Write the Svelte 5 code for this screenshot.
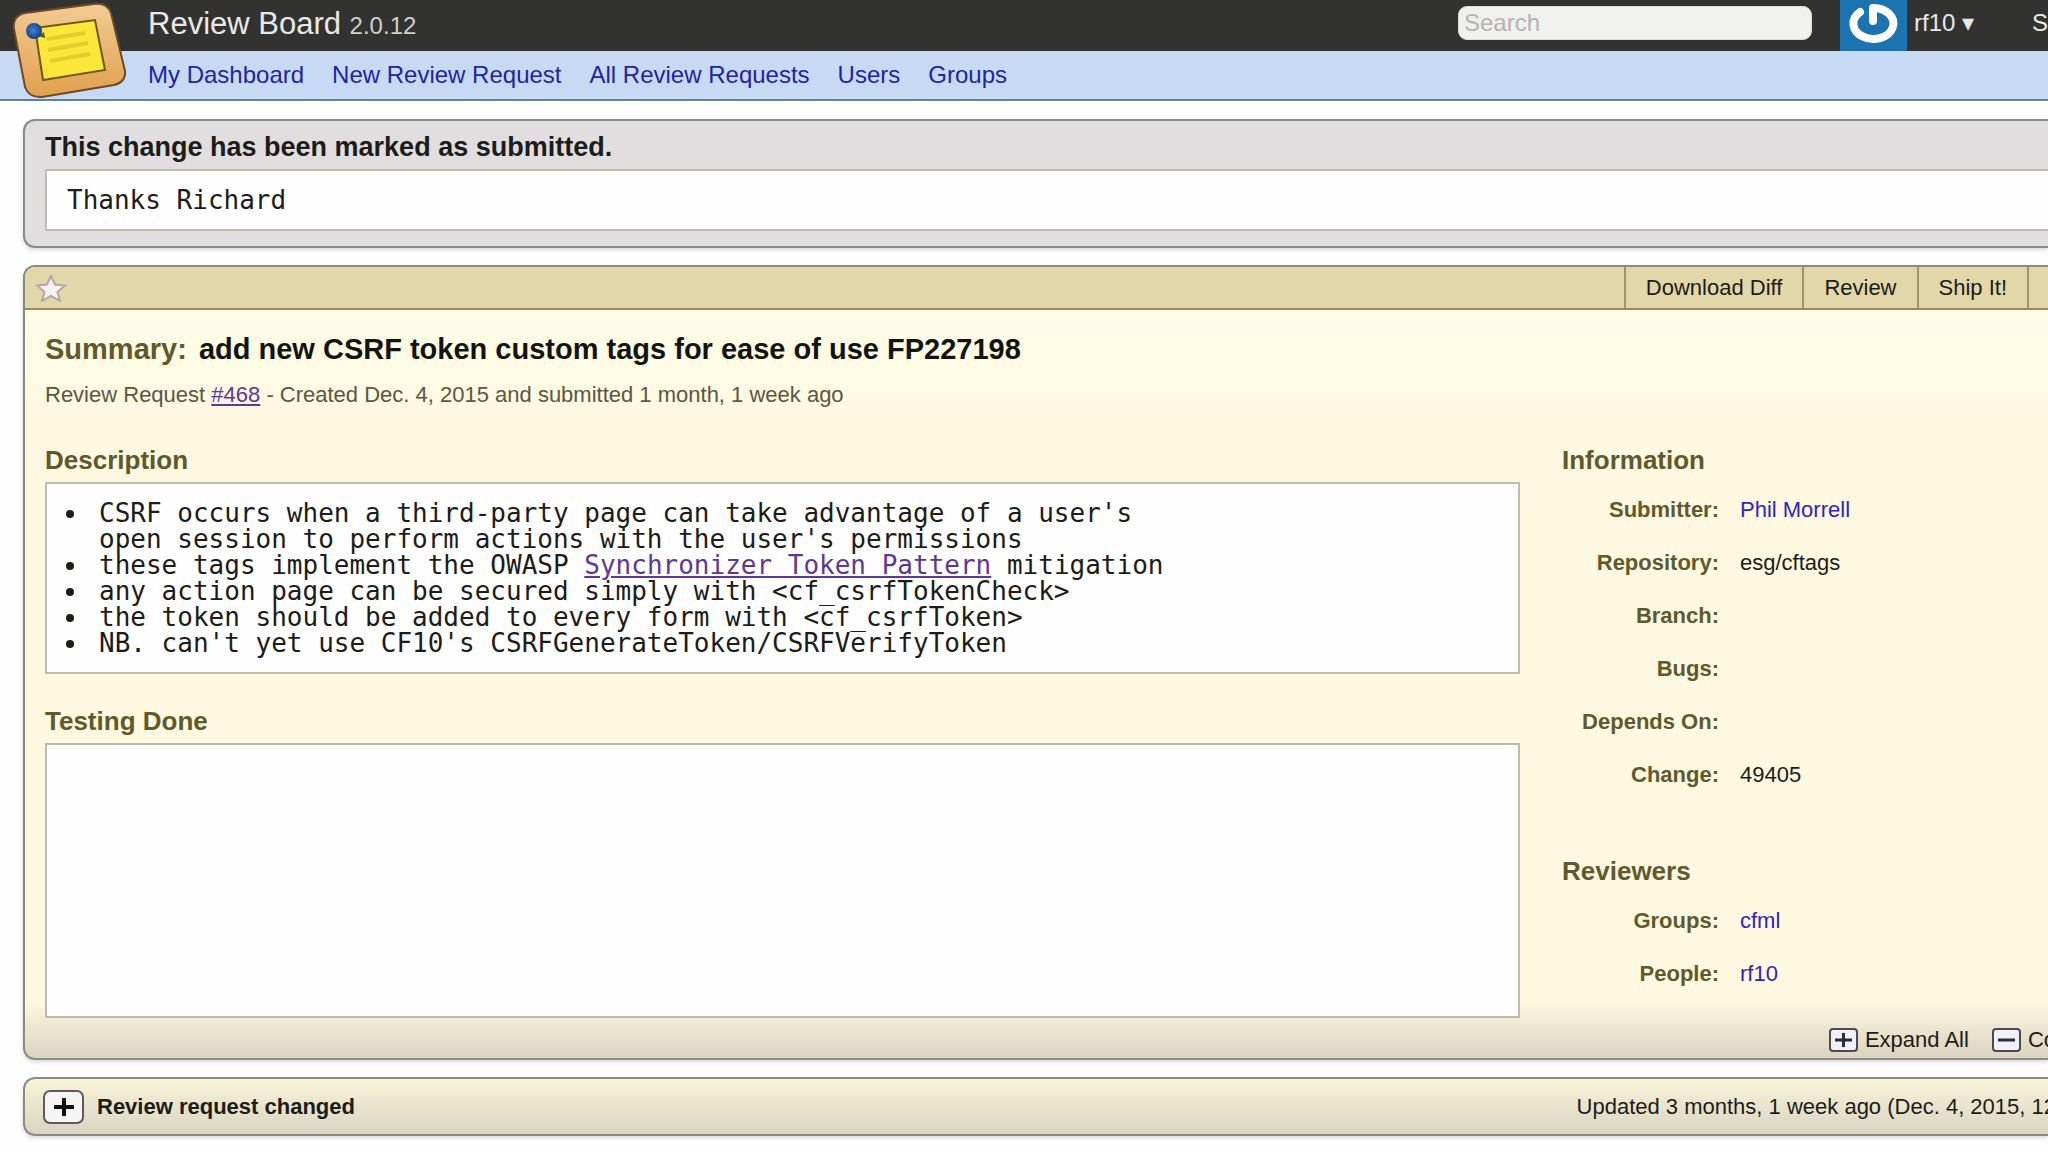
<script>
    const navLinks = ['My Dashboard', 'New Review Request', 'All Review Requests', 'Users', 'Groups'];
    const actions = ['Download Diff', 'Review', 'Ship It!'];

    const information = [
        { label: 'Submitter', value: 'Phil Morrell', link: true },
        { label: 'Repository', value: 'esg/cftags' },
        { label: 'Branch', value: '' },
        { label: 'Bugs', value: '' },
        { label: 'Depends On', value: '' },
        { label: 'Change', value: '49405' }
    ];

    const reviewers = [
        { label: 'Groups', value: 'cfml', link: true },
        { label: 'People', value: 'rf10', link: true }
    ];

    let search = $state('');
    let starred = $state(false);
</script>

{#snippet fields(rows)}
    <dl class="fields">
        {#each rows as row}
            <dt>{row.label}:</dt>
            <dd>
                {#if row.link}
                    <a href="#{row.value}">{row.value}</a>
                {:else}
                    {row.value}
                {/if}
            </dd>
        {/each}
    </dl>
{/snippet}

{#snippet toggleIcon(open)}
    <svg class="toggle-icon" width="29" height="24" viewBox="0 0 29 24" aria-hidden="true">
        <rect x="1" y="1" width="27" height="22" rx="3" fill="#f1effa" stroke="#4b4a50" stroke-width="2" />
        <path d={open ? 'M6 12h17' : 'M6 12h17M14.5 5v14'} stroke="#2c2c34" stroke-width="3" />
    </svg>
{/snippet}

<div class="page">
    <header>
        <div class="topbar">
            <h1>Review Board <span class="version">2.0.12</span></h1>
            <input type="text" class="search" placeholder="Search" aria-label="Search" bind:value={search} />
            <div class="account">
                <svg class="avatar" width="67" height="51" viewBox="0 0 67 51" aria-hidden="true">
                    <rect width="67" height="51" fill="#1b74b0" />
                    <path d="M20 12A20 15.500 0 1 0 33 8V21" fill="none" stroke="#fbfeff" stroke-width="8" stroke-linecap="round" stroke-linejoin="round" />
                </svg>
                <button class="user-menu">rf10 <span class="caret">▾</span></button>
            </div>
            <a class="support" href="#support">S</a>
        </div>
        <nav>
            {#each navLinks as link}
                <a href="#nav">{link}</a>
            {/each}
        </nav>
        <a class="logo" href="#home" aria-label="Home">
            <svg width="130" height="102" viewBox="0 0 130 102">
                <defs>
                    <linearGradient id="cork" x1="0" y1="0" x2="0" y2="1">
                        <stop offset="0" stop-color="#f3cb95" />
                        <stop offset="1" stop-color="#e2a04e" />
                    </linearGradient>
                    <radialGradient id="pin" cx="0.45" cy="0.45" r="0.6">
                        <stop offset="0" stop-color="#3d82dd" />
                        <stop offset="1" stop-color="#173a78" />
                    </radialGradient>
                </defs>
                <path d="M25 13L94 4Q107 2 111 13L125 71Q126 82 114 85L42 97Q29 98 25 87L14 29Q12 16 25 13Z" fill="url(#cork)" stroke="#6b4a25" stroke-width="2" />
                <path d="M35 28L95 20L105 70L43 80Z" fill="#fbe73a" stroke="#6f5a17" stroke-width="2" />
                <path d="M47 39l38-6M48 50l40-7M50 61l40-7" stroke="#e3cd2a" stroke-width="4" />
                <path d="M38 36l7 2-1-6z" fill="#5d5220" />
                <circle cx="34" cy="31" r="8" fill="url(#pin)" />
            </svg>
        </a>
    </header>

    <main>
        <section class="panel submitted">
            <h2>This change has been marked as submitted.</h2>
            <pre class="text-box open-ended">Thanks Richard</pre>
        </section>

        <section class="panel request">
            <div class="actions">
                <button class="star" aria-label="Star" aria-pressed={starred} onclick={() => (starred = !starred)}>
                    <svg width="32" height="28" viewBox="0 0 32 28">
                        <path d="M16 2l4 8.500 10 1-7.500 6.500 2.500 9-9-5-9 5 2.500-9-7.500-6.500 10-1z" fill="#f4f2f4" stroke="#b5a79b" stroke-width="2" />
                    </svg>
                </button>
                <ul>
                    {#each actions as action}
                        <li><button>{action}</button></li>
                    {/each}
                    <li class="more"></li>
                </ul>
            </div>

            <div class="body">
                <h2 class="summary"><span class="label">Summary:</span> add new CSRF token custom tags for ease of use FP227198</h2>
                <p class="meta">Review Request <a href="#468">#468</a> - Created Dec. 4, 2015 and submitted 1 month, 1 week ago</p>

                <div class="columns">
                    <div class="content">
                        <h3>Description</h3>
                        <div class="text-box description">
                            <ul>
                                <li>CSRF occurs when a third-party page can take advantage of a user's<br />open session to perform actions with the user's permissions</li>
                                <li>these tags implement the OWASP <a href="#pattern">Synchronizer Token Pattern</a> mitigation</li>
                                <li>any action page can be secured simply with &lt;cf_csrfTokenCheck&gt;</li>
                                <li>the token should be added to every form with &lt;cf_csrfToken&gt;</li>
                                <li>NB. can't yet use CF10's CSRFGenerateToken/CSRFVerifyToken</li>
                            </ul>
                        </div>
                        <h3>Testing Done</h3>
                        <div class="text-box testing"></div>
                    </div>
                    <aside>
                        <h3>Information</h3>
                        {@render fields(information)}
                        <h3>Reviewers</h3>
                        {@render fields(reviewers)}
                    </aside>
                </div>
            </div>

            <div class="footer">
                <button>{@render toggleIcon(false)}Expand All</button>
                <button>{@render toggleIcon(true)}Co</button>
            </div>
        </section>

        <section class="panel change">
            <button class="expand" aria-label="Expand">
                <svg width="20" height="18" viewBox="0 0 20 18">
                    <path d="M0 9h20M10 0v18" stroke="#111" stroke-width="4" />
                </svg>
            </button>
            <h4>Review request changed</h4>
            <span class="timestamp">Updated 3 months, 1 week ago (Dec. 4, 2015, 12</span>
        </section>
    </main>
</div>

<style>
    :global(body) {
        margin: 0;
        background: #fefefe;
    }

    .page {
        overflow: hidden;
        padding-bottom: 16px;
        font-family: "Liberation Sans", Arial, sans-serif;
        font-size: 22px;
        line-height: 28px;
        color: #1c1c18;
    }

    h1, h2, h3, h4, p, ul, dl, dd, pre {
        margin: 0;
        padding: 0;
    }

    button {
        padding: 0;
        border: none;
        background: none;
        font: inherit;
        color: inherit;
        white-space: nowrap;
        cursor: pointer;
    }

    a {
        color: #2f24c4;
        text-decoration: none;
    }

    /* Header */
    header {
        position: relative;
    }

    .topbar {
        display: flex;
        align-items: center;
        height: 51px;
        padding-left: 148px;
        background: #323331;
        color: #e9e9e7;
        font-size: 24px;
    }

    h1 {
        margin-right: auto;
        padding-bottom: 2px;
        font-size: 31px;
        font-weight: normal;
        line-height: 36px;
    }

    .version {
        font-size: 24px;
        color: #cfcfcd;
    }

    .search {
        box-sizing: border-box;
        width: 354px;
        height: 34px;
        margin: 0 28px 6px 0;
        padding: 0 5px;
        border: 1px solid #dcdcda;
        border-radius: 9px;
        background: #f0f0ee;
        font: inherit;
    }

    .search::placeholder {
        color: #b3b3b1;
        opacity: 1;
    }

    .account {
        display: flex;
        align-items: center;
        gap: 7px;
        width: 192px;
    }

    .user-menu,
    .support {
        padding-bottom: 6px;
    }

    .caret {
        font-family: "DejaVu Sans", sans-serif;
    }

    .support {
        color: inherit;
    }

    nav {
        display: flex;
        align-items: center;
        gap: 28px;
        height: 48px;
        padding-left: 148px;
        border-bottom: 2px solid #64809f;
        background: #c6dbf3;
        font-size: 24px;
    }

    nav a {
        color: #2323a5;
    }

    .logo {
        position: absolute;
        top: 0;
        left: 0;
    }

    .logo svg {
        display: block;
    }

    /* Panels */
    main {
        display: flex;
        flex-direction: column;
        gap: 17px;
        padding: 18px 0 0 23px;
    }

    .panel {
        border: 2px solid #8d8b80;
        border-right: none;
        border-radius: 12px 0 0 12px;
        box-shadow: 0 2px 4px rgba(0, 0, 0, 0.15);
    }

    .submitted {
        padding: 9px 0 15px 20px;
        border-color: #8c8b8c;
        background: #e0dedf;
    }

    .submitted h2 {
        font-size: 27px;
        line-height: 34px;
    }

    .text-box {
        margin-top: 5px;
        padding: 16px 20px;
        border: 2px solid #bdbcb0;
        background: #fefefe;
        font-family: "DejaVu Sans Mono", monospace;
        font-size: 26px;
        line-height: 26px;
    }

    .open-ended {
        border-right: none;
    }

    .request {
        background: linear-gradient(#fdf7df00, #dad4c0) bottom / 100% 56px no-repeat,
            linear-gradient(#fffeea, #fdf8e0 160px);
    }

    .actions {
        display: flex;
        align-items: center;
        justify-content: space-between;
        height: 41px;
        padding-left: 10px;
        border-bottom: 2px solid #958a62;
        border-radius: 10px 0 0 0;
        background: #e2d7a8;
    }

    .star svg {
        display: block;
    }

    .actions ul {
        display: flex;
        align-self: stretch;
        list-style: none;
    }

    .actions li {
        display: flex;
        border-left: 2px solid #a0956a;
    }

    .actions li button {
        padding: 0 20px;
    }

    .actions .more {
        width: 19px;
    }

    .body {
        padding: 21px 0 0 20px;
    }

    .summary {
        font-size: 29px;
        line-height: 36px;
        color: #14140f;
    }

    .label {
        margin-right: 4px;
        color: #5f5a2b;
    }

    .meta {
        margin-top: 14px;
        color: #5b5840;
    }

    .meta a,
    .description a {
        color: #5f3796;
        text-decoration: underline;
    }

    .columns {
        display: flex;
        gap: 42px;
        margin-top: 34px;
    }

    .content {
        flex: 1;
    }

    aside {
        width: 486px;
    }

    h3 {
        font-size: 26px;
        line-height: 34px;
        color: #5f5a2b;
    }

    .text-box + h3 {
        margin-top: 30px;
    }

    .description {
        padding-left: 42px;
    }

    .description li {
        padding-left: 10px;
    }

    .testing {
        height: 239px;
    }

    .fields {
        display: grid;
        grid-template-columns: 157px 1fr;
        column-gap: 21px;
        grid-auto-rows: 53px;
        margin-top: 6px;
        line-height: 53px;
    }

    .fields + h3 {
        margin-top: 53px;
    }

    dt {
        font-weight: bold;
        text-align: right;
        white-space: nowrap;
        color: #5f5a2b;
    }

    .footer {
        display: flex;
        align-items: center;
        justify-content: flex-end;
        gap: 23px;
        height: 36px;
        margin-right: -8px;
        padding-top: 4px;
    }

    .footer button {
        display: flex;
        align-items: center;
        gap: 7px;
    }

    .change {
        display: flex;
        align-items: center;
        height: 55px;
        padding-left: 18px;
        background: linear-gradient(#f9f5d8, #d7d4c3);
    }

    .expand {
        display: flex;
        align-items: center;
        justify-content: center;
        box-sizing: border-box;
        width: 41px;
        height: 34px;
        margin-right: 13px;
        border: 2px solid #5c5b56;
        border-radius: 7px;
        background: #f6f5f6;
    }

    h4 {
        font-size: 22px;
    }

    .timestamp {
        margin-left: auto;
        margin-right: -8px;
        white-space: nowrap;
    }
</style>
